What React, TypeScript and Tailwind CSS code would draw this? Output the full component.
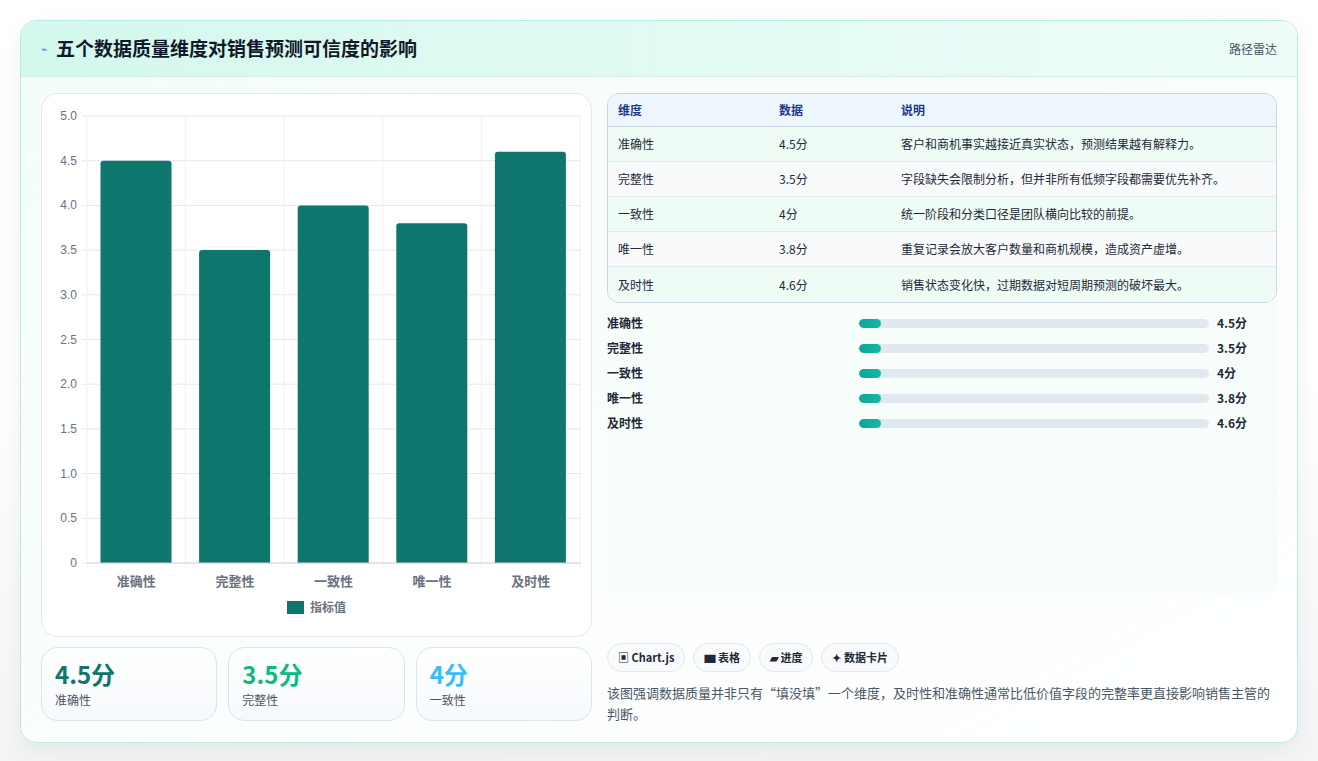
import React from "react";

const F = { fontFamily: '"Noto Sans CJK SC", "Noto Sans", sans-serif' };
const data = [
  { k: "准确性", v: 4.5, d: "客户和商机事实越接近真实状态，预测结果越有解释力。" },
  { k: "完整性", v: 3.5, d: "字段缺失会限制分析，但并非所有低频字段都需要优先补齐。" },
  { k: "一致性", v: 4, d: "统一阶段和分类口径是团队横向比较的前提。" },
  { k: "唯一性", v: 3.8, d: "重复记录会放大客户数量和商机规模，造成资产虚增。" },
  { k: "及时性", v: 4.6, d: "销售状态变化快，过期数据对短周期预测的破坏最大。" },
];

function Chart() {
  const x0 = 45, x1 = 538, y0 = 22, y1 = 469;
  const h = y1 - y0;
  const cw = (x1 - x0) / 5;
  const ticks = [0, 0.5, 1, 1.5, 2, 2.5, 3, 3.5, 4, 4.5, 5];
  return (
    <svg width="550" height="543" className="block">
      {ticks.map((t) => {
        const y = y1 - (t / 5) * h;
        return (
          <g key={t}>
            <line x1={x0 - 5} x2={x1} y1={y} y2={y} stroke="#e5e7eb" />
            <text x={x0 - 10} y={y + 4} textAnchor="end" fontSize="12" fill="#6b7280" fontFamily="Liberation Sans, sans-serif">
              {t === 0 ? "0" : t.toFixed(1)}
            </text>
          </g>
        );
      })}
      {[0, 1, 2, 3, 4, 5].map((i) => (
        <line key={i} x1={x0 + i * cw} x2={x0 + i * cw} y1={y0} y2={y1 + 6} stroke="#eef0f3" />
      ))}
      {data.map((d, i) => {
        const bh = (d.v / 5) * h;
        const bx = x0 + i * cw + 13.5;
        return (
          <g key={d.k}>
            <path d={`M${bx} ${y1} V${y1 - bh + 3} Q${bx} ${y1 - bh} ${bx + 3} ${y1 - bh} H${bx + 68} Q${bx + 71} ${y1 - bh} ${bx + 71} ${y1 - bh + 3} V${y1} Z`} fill="#0f766e" />
            <text x={x0 + i * cw + cw / 2} y={y1 + 23} textAnchor="middle" fontSize="13" fill="#6b7280" fontWeight="600" style={F}>{d.k}</text>
          </g>
        );
      })}
      <line x1={x0} x2={x1} y1={y1} y2={y1} stroke="#d1d5db" />
      <rect x="245" y="507" width="17" height="13" fill="#0f766e" />
      <text x="268" y="518" fontSize="12" fill="#6b7280" fontWeight="600" style={F}>指标值</text>
    </svg>
  );
}

export default function App() {
  return (
    <div className="min-h-[761px] bg-gradient-to-b from-white via-white to-[#f3f4f6] px-5 pt-5 pb-5" style={F}>
      <div className="rounded-2xl border border-[#b9ece3] bg-gradient-to-br from-[#f4fdf9] to-white shadow-[0_8px_24px_rgba(0,0,0,0.06)] overflow-hidden">
        <div className="h-[56px] flex items-center justify-between px-5 bg-gradient-to-r from-[#d3f8ee] to-[#eefdf8] border-b border-[#d5efe8]">
          <div className="flex items-center gap-2">
            <span className="text-[#3b82f6] text-[11px]">⌁</span>
            <span className="text-[19px] font-bold text-[#111827]">五个数据质量维度对销售预测可信度的影响</span>
          </div>
          <span className="text-[12px] text-[#4b5563]">路径雷达</span>
        </div>
        <div className="flex gap-[15px] px-5 pt-4 pb-[18px]">
          <div className="w-[551px] flex flex-col gap-[10px]">
            <div className="h-[544px] rounded-2xl border border-[#e5e7eb] bg-white overflow-hidden">
              <Chart />
            </div>
            <div className="grid grid-cols-3 gap-[11px]">
              {[
                { v: "4.5分", k: "准确性", c: "text-[#0f766e]" },
                { v: "3.5分", k: "完整性", c: "text-[#10b981]" },
                { v: "4分", k: "一致性", c: "text-[#38bdf8]" },
              ].map((s) => (
                <div key={s.k} className="h-[74px] rounded-2xl border border-[#dbe5f0] bg-gradient-to-b from-white to-[#f6f9fc] px-[13px] pt-3">
                  <div className={`text-[24px] font-bold leading-[28px] ${s.c}`}>{s.v}</div>
                  <div className="text-[12px] text-[#4b5563] mt-[3px]">{s.k}</div>
                </div>
              ))}
            </div>
          </div>
          <div className="flex-1 flex flex-col">
            <div className="h-[500px] bg-[#f7fdfb] -mx-0 rounded-b-md">
              <div className="rounded-xl border border-[#cbd5e1] overflow-hidden text-[12px]">
                <div className="grid grid-cols-[161px_122px_1fr] h-[33px] items-center bg-[#eef6fe] border-b border-[#cbd5e1] px-[10px] font-semibold text-[#1e3a8a]">
                  <span>维度</span><span>数据</span><span>说明</span>
                </div>
                {data.map((d, i) => (
                  <div key={d.k} className={`grid grid-cols-[161px_122px_1fr] h-[35px] items-center px-[10px] text-[#1f2937] ${i % 2 === 0 ? "bg-[#effcf6]" : "bg-[#f8fafc]"} ${i < 4 ? "border-b border-[#e2e8f0]" : ""}`}>
                    <span>{d.k}</span><span>{d.v}分</span><span>{d.d}</span>
                  </div>
                ))}
              </div>
              <div className="mt-[12px] flex flex-col gap-[9px]">
                {data.map((d) => (
                  <div key={d.k} className="flex items-center h-4 text-[12px] font-semibold text-[#1f2937]">
                    <span className="w-[252px]">{d.k}</span>
                    <div className="w-[350px] h-[9px] rounded-full bg-[#e2e8f0] overflow-hidden">
                      <div className="w-[22px] h-full rounded-full bg-gradient-to-r from-[#0ea59a] to-[#14b8a6]" />
                    </div>
                    <span className="ml-2">{d.v}分</span>
                  </div>
                ))}
              </div>
            </div>
            <div className="mt-[50px] flex gap-2 text-[11px] font-semibold text-[#1f2937]">
              {["▣ Chart.js", "▆ 表格", "▰ 进度", "✦ 数据卡片"].map((c) => (
                <span key={c} className="h-[29px] px-[10px] flex items-center rounded-full border border-[#e2e8f0] bg-[#f8fafc]">{c}</span>
              ))}
            </div>
            <p className="mt-[10px] text-[13px] leading-[21px] text-[#4b5563]">
              该图强调数据质量并非只有“填没填”一个维度，及时性和准确性通常比低价值字段的完整率更直接影响销售主管的判断。
            </p>
          </div>
        </div>
      </div>
    </div>
  );
}
